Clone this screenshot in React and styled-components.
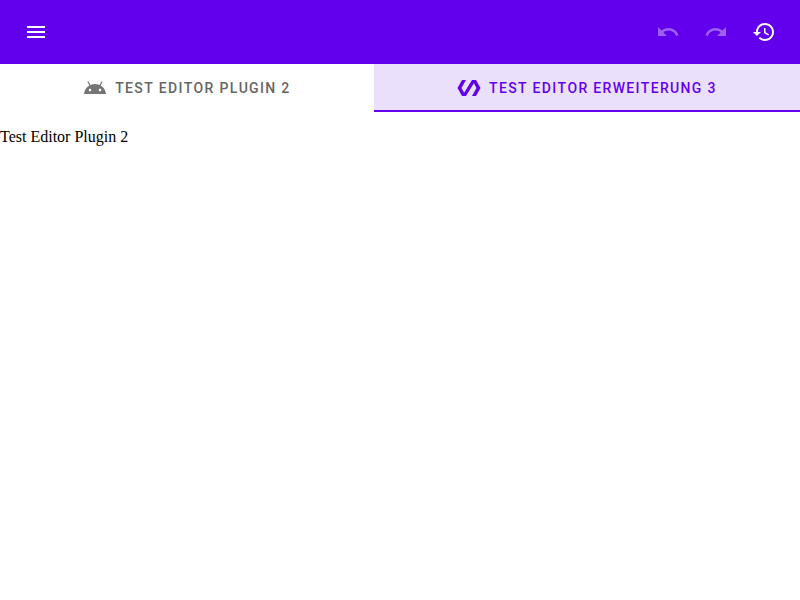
import React from "react";
import styled, { createGlobalStyle } from "styled-components";

const GlobalStyle = createGlobalStyle`
  body { margin: 0; background: #fff; }
`;

const Page = styled.main`
  display: flex;
  flex-direction: column;
  min-height: 100vh;
`;

const TopBar = styled.header`
  display: flex;
  align-items: center;
  justify-content: space-between;
  box-sizing: border-box;
  height: 64px;
  padding: 8px 12px;
  background: #6200ee;
  color: #fff;
`;

const Actions = styled.div`
  display: flex;
`;

const IconButton = styled.button`
  display: flex;
  box-sizing: border-box;
  width: 48px;
  height: 48px;
  padding: 12px;
  border: 0;
  background: transparent;
  color: inherit;
  opacity: ${(p) => (p.disabled ? 0.38 : 1)};
`;

const Glyph = styled.svg`
  display: block;
  flex: none;
  width: 24px;
  height: 24px;
  fill: currentColor;
`;

const TabBar = styled.nav`
  display: flex;
  height: 48px;
`;

const Tab = styled.button`
  display: flex;
  flex: 1 0 auto;
  align-items: center;
  justify-content: center;
  box-sizing: border-box;
  height: 48px;
  padding: 0 24px;
  border: 0;
  background: ${(p) => (p.$active ? "#ebe0fc" : "transparent")};
  box-shadow: ${(p) => (p.$active ? "inset 0 -2px #6200ee" : "none")};
  color: ${(p) => (p.$active ? "#6200ee" : "#757575")};
`;

const TabLabel = styled.span`
  padding-left: 8px;
  color: ${(p) => (p.$active ? "#6200ee" : "#666")};
  font: 500 14px/20px Roboto, sans-serif;
  font-kerning: none;
  letter-spacing: 1.32px;
  text-transform: uppercase;
  white-space: nowrap;
`;

const Content = styled.p`
  margin: 16px 0;
  font: 16px/18px "Liberation Serif", serif;
  color: #000;
`;

const icons = {
  menu: "M3 18h18v-2H3v2zm0-5h18v-2H3v2zm0-7v2h18V6H3z",
  undo: "M12.5 8c-2.65 0-5.05.99-6.9 2.6L2 7v9h9l-3.62-3.62c1.39-1.16 3.16-1.88 5.12-1.88 3.54 0 6.55 2.31 7.6 5.5l2.37-.78C21.08 11.03 17.15 8 12.5 8z",
  redo: "M18.4 10.6C16.55 8.99 14.15 8 11.5 8c-4.65 0-8.58 3.03-9.96 7.22L3.9 16c1.05-3.19 4.05-5.5 7.6-5.5 1.95 0 3.73.72 5.12 1.88L13 16h9V7l-3.6 3.6z",
  history: "M13 3c-4.97 0-9 4.03-9 9H1l3.89 3.89.07.14L9 12H6c0-3.87 3.13-7 7-7s7 3.13 7 7-3.13 7-7 7c-1.93 0-3.68-.79-4.94-2.06l-1.42 1.42C8.27 19.99 10.51 21 13 21c4.97 0 9-4.03 9-9s-4.03-9-9-9zm-1 5v5l4.28 2.54.72-1.21-3.5-2.08V8H12z",
  android: "M17.6 9.48l1.84-3.18c.16-.31.04-.69-.26-.85-.29-.15-.65-.06-.83.22l-1.88 3.24c-2.86-1.21-6.08-1.21-8.94 0L5.65 5.67c-.19-.29-.58-.38-.87-.2-.28.18-.37.54-.22.83L6.4 9.48C3.3 11.25 1.28 14.44 1 18h22c-.28-3.56-2.3-6.75-5.4-8.52zM7 15.25c-.69 0-1.25-.56-1.25-1.25s.56-1.25 1.25-1.25 1.25.56 1.25 1.25-.56 1.25-1.25 1.25zm10 0c-.69 0-1.25-.56-1.25-1.25s.56-1.25 1.25-1.25 1.25.56 1.25 1.25-.56 1.25-1.25 1.25z",
  polymer: "M19 4h-4L7.11 16.63 4.5 12 9 4H5L.5 12 5 20h4l7.89-12.63L19.5 12 15 20h4l4.5-8z",
};

function Icon({ name }) {
  return (
    <Glyph viewBox="0 0 24 24" aria-hidden="true">
      <path d={icons[name]} />
    </Glyph>
  );
}

export default function App() {
  return (
    <Page>
      <GlobalStyle />
      <TopBar>
        <IconButton aria-label="Menu"><Icon name="menu" /></IconButton>
        <Actions>
          <IconButton disabled aria-label="Undo"><Icon name="undo" /></IconButton>
          <IconButton disabled aria-label="Redo"><Icon name="redo" /></IconButton>
          <IconButton aria-label="History"><Icon name="history" /></IconButton>
        </Actions>
      </TopBar>
      <TabBar>
        <Tab><Icon name="android" /><TabLabel>Test Editor Plugin 2</TabLabel></Tab>
        <Tab $active><Icon name="polymer" /><TabLabel $active>Test Editor Erweiterung 3</TabLabel></Tab>
      </TabBar>
      <Content>Test Editor Plugin 2</Content>
    </Page>
  );
}
